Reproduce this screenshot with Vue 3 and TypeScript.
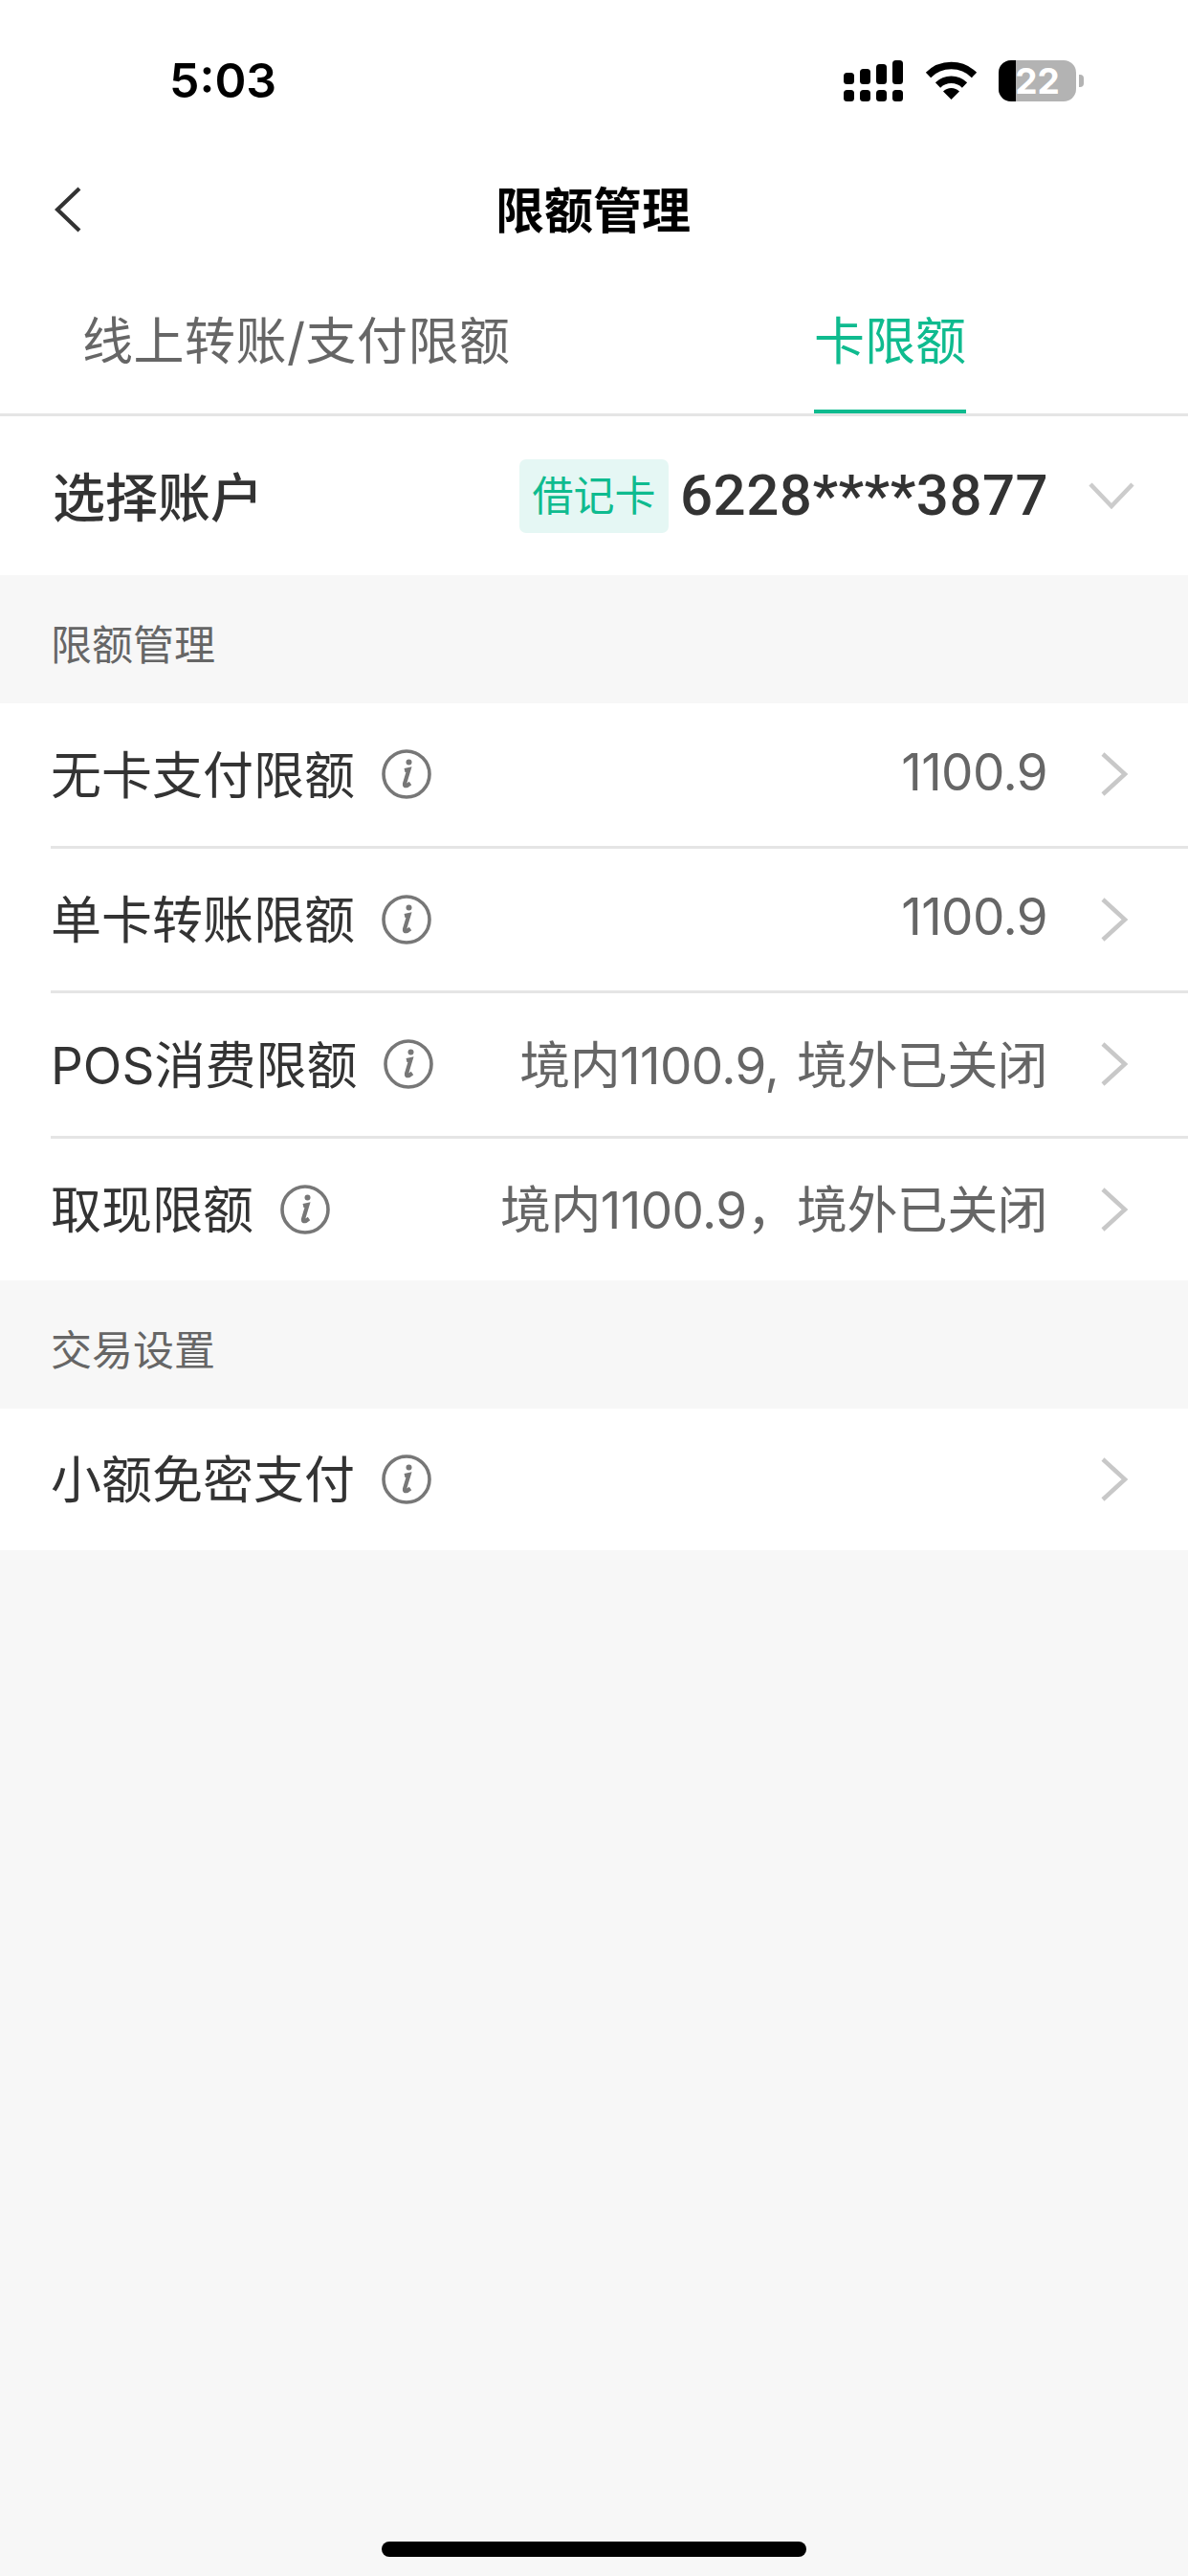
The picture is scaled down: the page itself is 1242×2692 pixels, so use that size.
<template>
  <div class="page">
    <div class="status-bar">
      <span class="time">5:03</span>
      <div class="status-icons">
        <svg class="signal" width="62" height="43" viewBox="0 0 62 43" fill="#000">
          <rect x="0" y="13" width="11" height="12" rx="3.5" />
          <rect x="17" y="9" width="11" height="16" rx="3.5" />
          <rect x="34" y="4" width="11" height="21" rx="3.5" />
          <rect x="51" y="0" width="11" height="25" rx="3.5" />
          <rect x="0" y="31" width="11" height="12" rx="3.5" />
          <rect x="17" y="31" width="11" height="12" rx="3.5" />
          <rect x="34" y="31" width="11" height="12" rx="3.5" />
          <rect x="51" y="31" width="11" height="12" rx="3.5" />
        </svg>
        <svg class="wifi" width="55" height="40" viewBox="0 0 55 40">
          <path d="M3.5 14.5 A34 34 0 0 1 51.5 14.5" fill="none" stroke="#000" stroke-width="7.5" />
          <path d="M13.5 25 A20 20 0 0 1 41.5 25" fill="none" stroke="#000" stroke-width="7.5" />
          <path d="M27.5 40 L19 31.5 A12 12 0 0 1 36 31.5 Z" fill="#000" />
        </svg>
        <div class="battery">
          <div class="battery-body">
            <div class="battery-fill"></div>
            <span class="battery-num">22</span>
          </div>
          <div class="battery-nub"></div>
        </div>
      </div>
    </div>

    <div class="nav">
      <svg class="back" width="28" height="48" viewBox="0 0 28 48">
        <path d="M26 2 L3 24 L26 46" fill="none" stroke="#333" stroke-width="4.2" />
      </svg>
      <span class="nav-title">限额管理</span>
    </div>

    <div class="tabs">
      <div class="tab">线上转账/支付限额</div>
      <div class="tab active">卡限额</div>
    </div>

    <div class="account">
      <span class="account-label">选择账户</span>
      <div class="account-right">
        <span class="card-tag">借记卡</span>
        <span class="card-no">6228****3877</span>
        <svg class="down" width="50" height="30" viewBox="0 0 50 30">
          <path d="M3 3 L25 26 L47 3" fill="none" stroke="#ccc" stroke-width="4.5" />
        </svg>
      </div>
    </div>

    <div v-for="section in sections" :key="section.title">
      <div class="section-title">{{ section.title }}</div>
      <div class="list">
        <div v-for="row in section.rows" :key="row.label" class="row">
          <span class="row-label">{{ row.label }}</span>
          <svg class="info" width="52" height="52" viewBox="0 0 52 52">
            <circle cx="26" cy="26" r="24" fill="none" stroke="#777" stroke-width="3.6" />
            <circle cx="28.5" cy="13.5" r="3" fill="#777" />
            <path d="M24 22 L28.5 21 L24 36 Q23.5 39 26.5 38 L30 35.5" fill="none" stroke="#777" stroke-width="4.2" />
          </svg>
          <span class="row-value">{{ row.value }}</span>
          <svg class="more" width="30" height="48" viewBox="0 0 30 48">
            <path d="M3 3 L26 24 L3 45" fill="none" stroke="#c8c8c8" stroke-width="4.5" />
          </svg>
        </div>
      </div>
    </div>

    <div class="home-bar"></div>
  </div>
</template>

<script setup lang="ts">
interface LimitRow {
  label: string
  value: string
}

const sections: { title: string; rows: LimitRow[] }[] = [
  {
    title: '限额管理',
    rows: [
      { label: '无卡支付限额', value: '1100.9' },
      { label: '单卡转账限额', value: '1100.9' },
      { label: 'POS消费限额', value: '境内1100.9, 境外已关闭' },
      { label: '取现限额', value: '境内1100.9，境外已关闭' },
    ],
  },
  {
    title: '交易设置',
    rows: [{ label: '小额免密支付', value: '' }],
  },
]
</script>

<style>
html,
body {
  margin: 0;
  background: #f7f7f7;
}
</style>

<style scoped>
.page {
  position: relative;
  width: 1242px;
  height: 2692px;
  background: #f7f7f7;
  font-family: Inter, "Noto Sans CJK SC", sans-serif;
  color: #333;
  overflow: hidden;
}

.status-bar,
.nav,
.tabs {
  background: #fff;
}

.status-bar {
  display: flex;
  justify-content: space-between;
  align-items: center;
  height: 168px;
  margin-bottom: -30px;
  padding: 0 109px 0 177px;
}

.time {
  font-size: 50px;
  font-weight: 600;
  color: #000;
  line-height: 1;
}

.status-icons {
  display: flex;
  align-items: center;
}

.signal {
  margin-right: 23px;
}

.wifi {
  margin-right: 22px;
}

.battery {
  display: flex;
  align-items: center;
}

.battery-body {
  position: relative;
  width: 81px;
  height: 43px;
  border-radius: 13px;
  background: #b3b3b3;
  overflow: hidden;
  display: flex;
  align-items: center;
  justify-content: center;
}

.battery-fill {
  position: absolute;
  left: 0;
  top: 0;
  bottom: 0;
  width: 18px;
  background: #000;
}

.battery-num {
  position: relative;
  font-size: 37px;
  font-weight: 700;
  color: #fff;
  line-height: 1;
}

.battery-nub {
  width: 5px;
  height: 13px;
  margin-left: 3px;
  border-radius: 0 4px 4px 0;
  background: #b3b3b3;
}

.nav {
  position: relative;
  height: 162px;
  display: flex;
  align-items: center;
  justify-content: center;
}

.back {
  position: absolute;
  left: 57px;
  top: 57px;
}

.nav-title {
  font-size: 51px;
  font-weight: 700;
  color: #000;
  margin: -5px 2px 0 0;
}

.tabs {
  display: flex;
  justify-content: space-between;
  height: 135px;
  box-sizing: border-box;
  padding: 0 232px 0 86px;
  border-bottom: 3px solid #e5e5e5;
}

.tab {
  height: 132px;
  box-sizing: border-box;
  font-size: 53px;
  line-height: 114px;
  letter-spacing: 0.5px;
  color: #666;
}

.tab.active {
  color: #0fbb8f;
  letter-spacing: 0;
  border-bottom: 4px solid #0fbb8f;
}

.account {
  display: flex;
  justify-content: space-between;
  align-items: center;
  height: 166px;
  padding: 0 55px;
  background: #fff;
}

.account-label {
  font-size: 55px;
  font-weight: 500;
  color: #333;
  margin-top: -5px;
}

.account-right {
  display: flex;
  align-items: center;
}

.card-tag {
  width: 156px;
  height: 77px;
  border-radius: 7px;
  background: #e5f7f4;
  color: #0fbb8f;
  font-size: 43px;
  line-height: 77px;
  text-align: center;
}

.card-no {
  width: 383px;
  margin: 0 43px 0 12px;
  font-family: Roboto, sans-serif;
  font-size: 60px;
  font-weight: 500;
  line-height: 1;
  letter-spacing: 0.5px;
  color: #333;
  white-space: nowrap;
}

.section-title {
  height: 134px;
  box-sizing: border-box;
  padding: 6px 0 0 53px;
  display: flex;
  align-items: center;
  font-size: 43px;
  color: #666;
}

.list {
  background: #fff;
}

.row {
  display: flex;
  align-items: center;
  height: 151.5px;
  box-sizing: border-box;
  margin-left: 53px;
  padding-right: 62px;
  border-bottom: 3px solid #e5e5e5;
}

.row:last-child {
  border-bottom: none;
  height: 148px;
}

.row-label {
  font-size: 53px;
  color: #333;
  white-space: nowrap;
  margin-top: -5px;
}

.info {
  margin-left: 28px;
}

.row-value {
  flex: 1;
  text-align: right;
  font-size: 53px;
  color: #666;
  white-space: nowrap;
  letter-spacing: -0.6px;
  word-spacing: 4.5px;
  margin-top: -5px;
}

.more {
  margin-left: 55px;
}

.home-bar {
  position: absolute;
  left: 399px;
  bottom: 20px;
  width: 444px;
  height: 16px;
  border-radius: 8px;
  background: #000;
}
</style>
